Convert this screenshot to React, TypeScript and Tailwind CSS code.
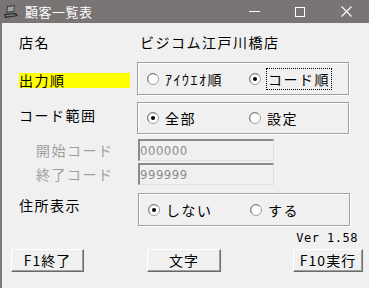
import React from "react";

const jp = { fontFamily: '"Noto Sans CJK JP", "Noto Sans", sans-serif' };

function Radio({ checked }: { checked?: boolean }) {
  return (
    <svg width="12" height="12" viewBox="0 0 12 12" className="shrink-0">
      <circle cx="6" cy="6" r="5.5" fill="#fff" stroke="#a0a0a0" />
      <path d="M2.2 9.5 A5 5 0 0 1 9.5 2.2" fill="none" stroke="#7a7a7a" strokeWidth="1" />
      <circle cx="6" cy="6" r="4" fill="#fff" />
      {checked && <circle cx="6" cy="6" r="2" fill="#000" />}
    </svg>
  );
}

function Option({ label, checked, focus, width }: { label: string; checked?: boolean; focus?: boolean; width?: string }) {
  return (
    <div className={`flex items-center gap-[6px] ${width ?? ""}`}>
      <Radio checked={checked} />
      <span className={focus ? "outline outline-1 outline-dotted outline-black px-[1px] leading-[20px]" : "leading-[20px]"}>
        {label}
      </span>
    </div>
  );
}

function Group({ children }: { children: React.ReactNode }) {
  return (
    <div className="w-[212px] h-full border border-[#a0a0a0] shadow-[1px_1px_0_#ffffff,inset_1px_1px_0_#ffffff] flex items-center pl-[9px]">
      {children}
    </div>
  );
}

function Field({ value }: { value: string }) {
  return (
    <div
      className="w-[136px] h-[22px] border-t-2 border-l-2 border-t-[#8a8a8a] border-l-[#8a8a8a] border-b border-r border-b-[#e0e0e0] border-r-[#e0e0e0] bg-[#f0f0f0] flex items-center text-[#8c8c8c] text-[13px] tracking-[0.5px]"
      style={{ fontFamily: '"DejaVu Sans Condensed", "Liberation Sans", sans-serif' }}
    >
      {value}
    </div>
  );
}

function Btn({ label, className }: { label: string; className?: string }) {
  return (
    <button
      className={`h-[23px] bg-[#f0f0f0] border border-t-white border-l-white border-b-[#6a6a6a] border-r-[#6a6a6a] shadow-[inset_-1px_-1px_0_#a0a0a0] text-[14px] tracking-[1px] flex items-center justify-center ${className ?? ""}`}
    >
      {label}
    </button>
  );
}

export default function App() {
  return (
    <div className="w-[369px] h-[288px] bg-[#f0f0f0] flex flex-col overflow-hidden text-black" style={jp}>
      {/* title bar */}
      <div className="h-[23px] bg-[#7a7574] flex items-center text-white shrink-0">
        <svg width="16" height="16" viewBox="0 0 16 16" className="ml-[3px]">
          <path d="M4 2 L12 1 L11 8 L3 9 Z" fill="#3c3c3c" />
          <path d="M5 3 L11 2.3 L10.3 7 L4.3 7.7 Z" fill="#9aa4ac" />
          <path d="M1 10 L13 9 L15 12 L2 14 Z" fill="#2a2a2a" />
          <path d="M2 11 L12 10.2 L13 11.5 L3 12.5 Z" fill="#7a7a7a" />
        </svg>
        <span className="ml-[6px] text-[13px] tracking-[0.5px] leading-none">顧客一覧表</span>
        <div className="ml-auto flex items-center h-full">
          <div className="w-[46px] flex justify-center">
            <div className="w-[11px] h-[1px] bg-white" />
          </div>
          <div className="w-[46px] flex justify-center">
            <div className="w-[10px] h-[10px] border border-white" />
          </div>
          <div className="w-[46px] flex justify-center">
            <svg width="11" height="11" viewBox="0 0 11 11">
              <path d="M0.5 0.5 L10.5 10.5 M10.5 0.5 L0.5 10.5" stroke="#fff" strokeWidth="1.1" />
            </svg>
          </div>
        </div>
      </div>

      {/* body */}
      <div className="flex-1 flex flex-col border-l-2 border-[#7d7878] pl-[17px] text-[14px] tracking-[1.5px]">
        <div className="mt-[10px] h-[18px] flex items-center">
          <span className="w-[121px]">店名</span>
          <span>ビジコム江戸川橋店</span>
        </div>

        <div className="mt-[11px] h-[33px] flex items-center">
          <div className="w-[118px]">
            <div className="w-[111px] h-[15px] bg-[#ffff00] leading-[15px] mt-[3px]">出力順</div>
          </div>
          <Group>
            <Option label="ｱｲｳｴｵ順" width="w-[102px]" />
            <Option label="コード順" checked focus />
          </Group>
        </div>

        <div className="mt-[7px] h-[32px] flex items-center">
          <div className="w-[118px] -mt-[6px]">コード範囲</div>
          <Group>
            <Option label="全部" checked width="w-[102px]" />
            <Option label="設定" />
          </Group>
        </div>

        <div className="mt-[5px] h-[22px] flex items-center">
          <div className="w-[119px] pl-[17px] text-[#a0a0a0]">開始コード</div>
          <Field value="000000" />
        </div>
        <div className="mt-[2px] h-[22px] flex items-center">
          <div className="w-[119px] pl-[17px] text-[#a0a0a0]">終了コード</div>
          <Field value="999999" />
        </div>

        <div className="mt-[8px] h-[33px] flex items-center">
          <div className="w-[119px] -mt-[8px]">住所表示</div>
          <Group>
            <Option label="しない" checked width="w-[102px]" />
            <Option label="する" />
          </Group>
        </div>

        <div
          className="mt-[6px] h-[13px] flex justify-end pr-[11px] text-[12px] tracking-[0.5px] leading-[13px]"
          style={{ fontFamily: '"DejaVu Sans Mono", monospace' }}
        >
          Ver 1.58
        </div>

        <div className="mt-[4px] flex items-center">
          <Btn label="F1終了" className="w-[73px] -ml-[8px]" />
          <Btn label="文字" className="w-[74px] ml-[63px]" />
          <Btn label="F10実行" className="w-[70px] ml-[72px]" />
        </div>
      </div>
    </div>
  );
}
